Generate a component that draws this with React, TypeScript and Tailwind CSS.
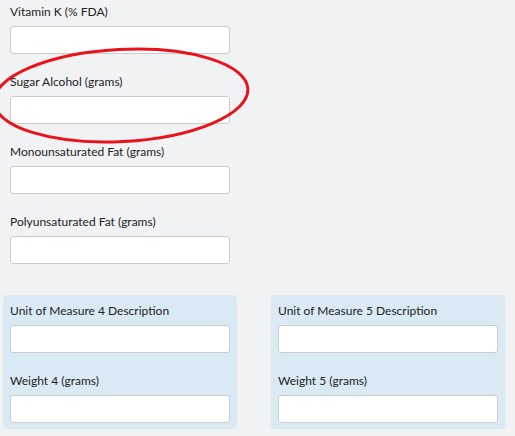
function Field({ label, className = "" }: { label: string; className?: string }) {
  return (
    <div className={className}>
      <label className="block h-4 text-[12px] leading-4 text-[#222]">{label}</label>
      <input
        type="text"
        className="mt-[6px] block h-[28px] w-[220px] rounded-[3px] border border-[#cccccc] bg-white"
      />
    </div>
  );
}

function MeasurePanel({ n }: { n: number }) {
  return (
    <div className="w-[234px] rounded-[4px] bg-[#d9eaf5] px-[7px] pt-2 pb-[6px]">
      <Field label={`Unit of Measure ${n} Description`} />
      <Field label={`Weight ${n} (grams)`} className="mt-5" />
    </div>
  );
}

export default function App() {
  return (
    <div
      className="relative h-[436px] w-[515px] overflow-hidden bg-[#f1f2f4]"
      style={{ fontFamily: "Lato, 'Open Sans', sans-serif" }}
    >
      <div className="px-[10px] pt-1">
        <Field label="Vitamin K (% FDA)" />
        <Field label="Sugar Alcohol (grams)" className="mt-5" />
        <Field label="Monounsaturated Fat (grams)" className="mt-5" />
        <Field label="Polyunsaturated Fat (grams)" className="mt-5" />
      </div>

      <div className="mt-[31px] flex gap-[34px] pl-[3px]">
        <MeasurePanel n={4} />
        <MeasurePanel n={5} />
      </div>

      {/* red annotation ring */}
      <svg
        className="pointer-events-none absolute left-0 top-0"
        width="515"
        height="436"
        viewBox="0 0 515 436"
      >
        <ellipse
          cx="121"
          cy="95.5"
          rx="127"
          ry="46"
          transform="rotate(-3 121 95.5)"
          fill="none"
          stroke="#e8131b"
          strokeWidth="3"
        />
      </svg>
    </div>
  );
}
